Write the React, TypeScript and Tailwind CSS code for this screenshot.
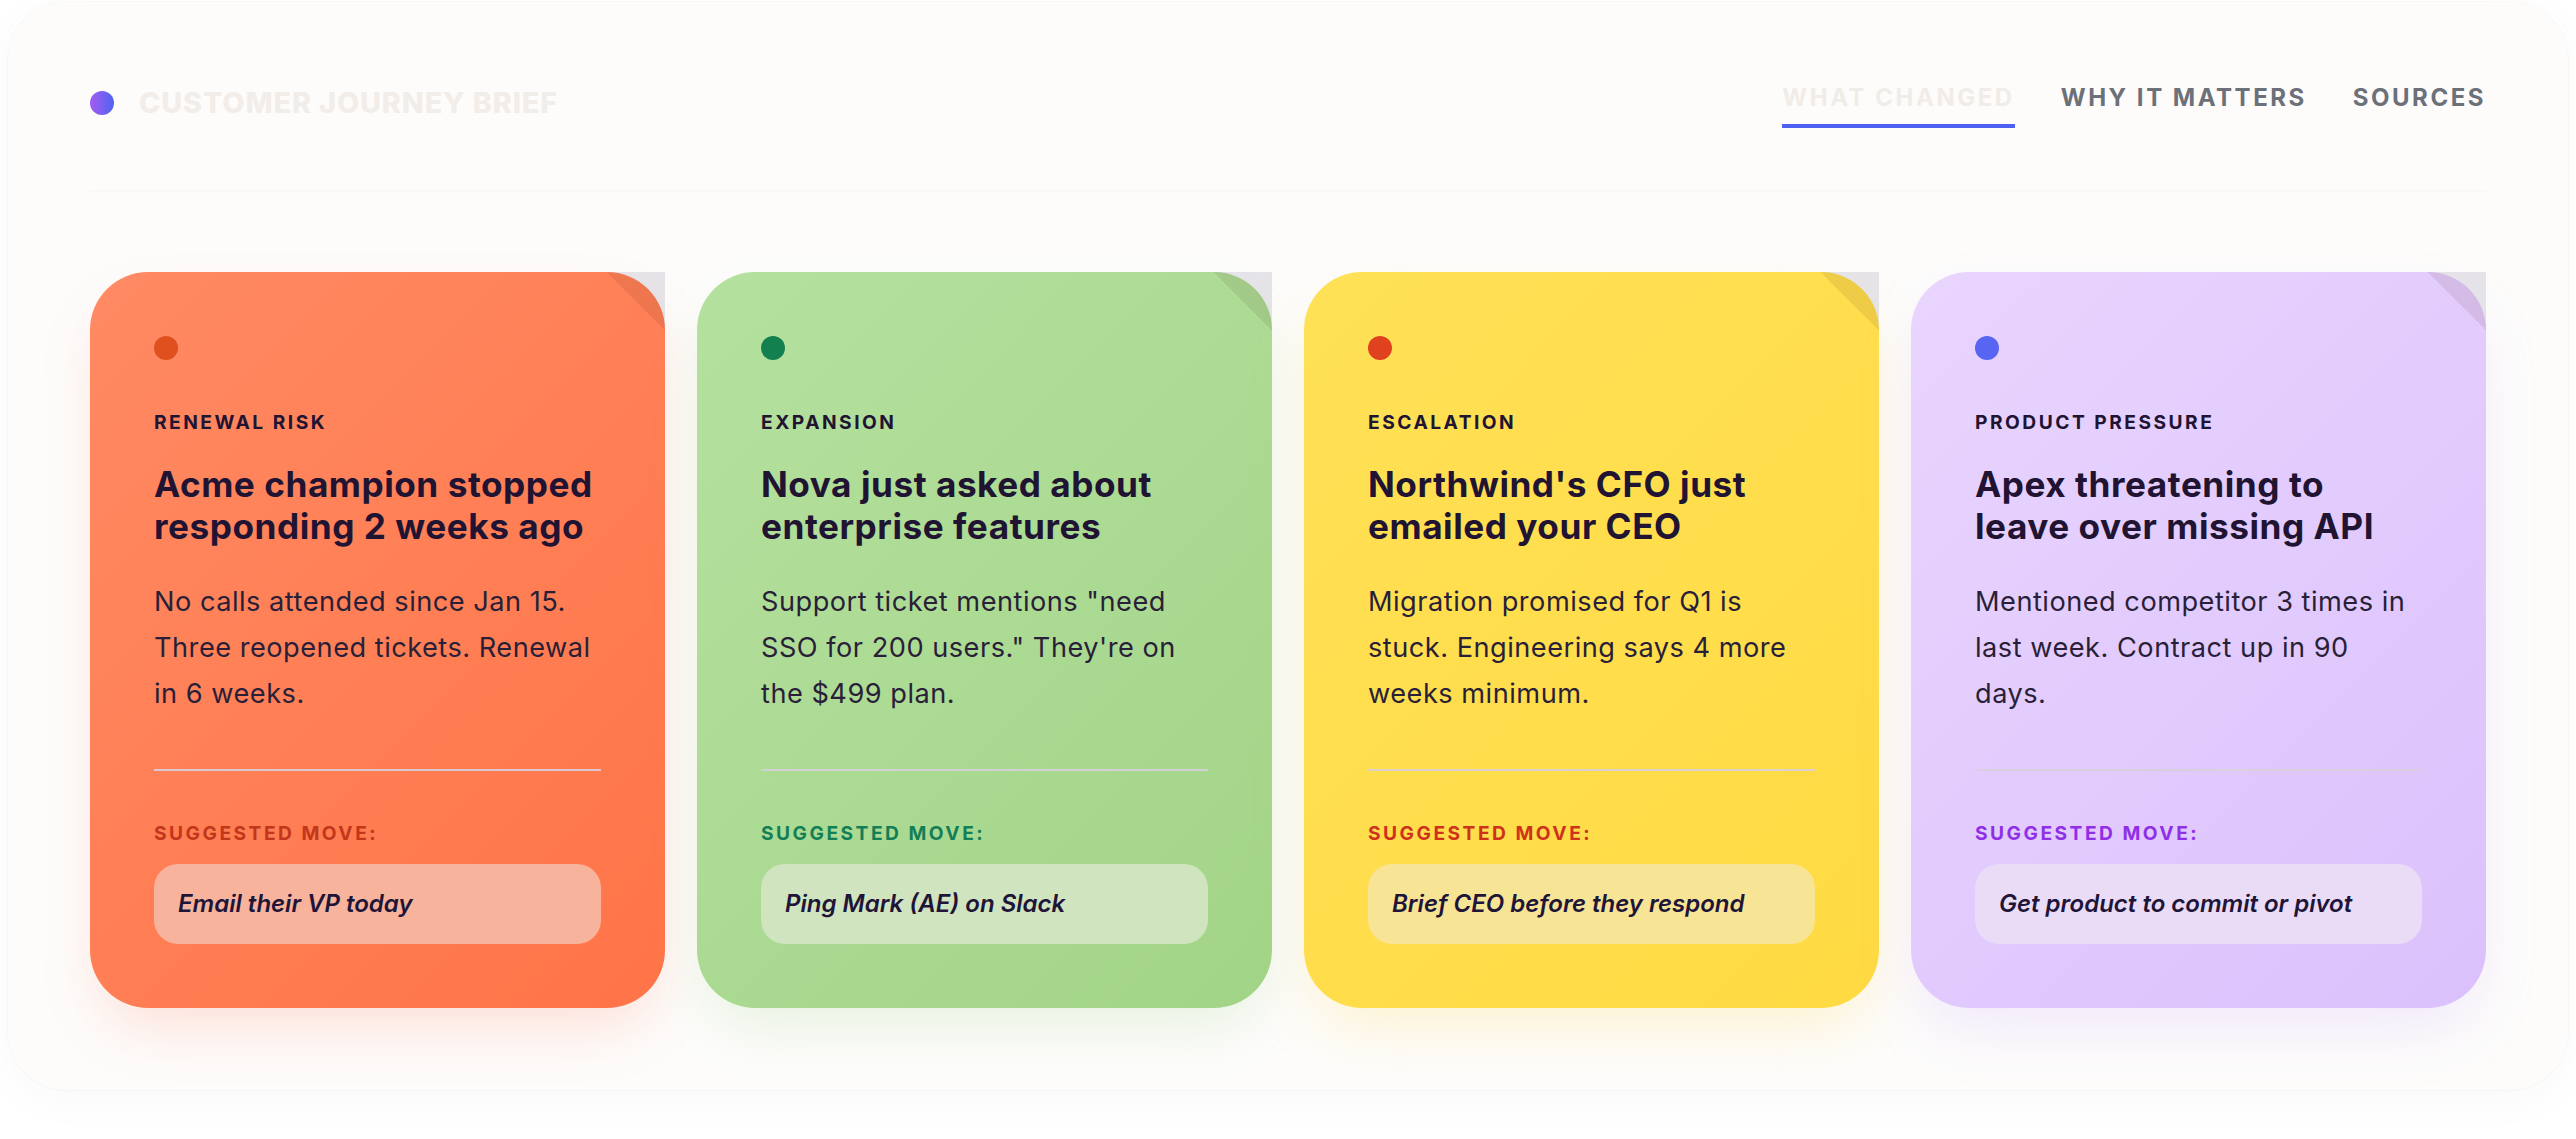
import React from "react";

type Signal = {
  label: string;
  title: string;
  body: string;
  move: string;
  card: string;
  glow: string;
  dot: string;
  moveLabel: string;
  moveBox: string;
};

const signals: Signal[] = [
  {
    label: "Renewal risk",
    title: "Acme champion stopped responding 2 weeks ago",
    body: "No calls attended since Jan 15. Three reopened tickets. Renewal in 6 weeks.",
    move: "Email their VP today",
    card: "bg-[linear-gradient(135deg,#ff8a63_0%,#ff7448_100%)]",
    glow: "shadow-[0_28px_60px_-12px_rgba(255,120,80,0.22)]",
    dot: "bg-[#e0501f]",
    moveLabel: "text-[#c2361a]",
    moveBox: "bg-[#f7b39b]"
  },
  {
    label: "Expansion",
    title: "Nova just asked about enterprise features",
    body: "Support ticket mentions \"need SSO for 200 users.\" They're on the $499 plan.",
    move: "Ping Mark (AE) on Slack",
    card: "bg-[linear-gradient(135deg,#b5e19f_0%,#a2d487_100%)]",
    glow: "shadow-[0_28px_60px_-12px_rgba(140,200,110,0.2)]",
    dot: "bg-[#13804f]",
    moveLabel: "text-[#137f57]",
    moveBox: "bg-[#cfe4bf]"
  },
  {
    label: "Escalation",
    title: "Northwind's CFO just emailed your CEO",
    body: "Migration promised for Q1 is stuck. Engineering says 4 more weeks minimum.",
    move: "Brief CEO before they respond",
    card: "bg-[linear-gradient(135deg,#ffe157_0%,#ffda42_100%)]",
    glow: "shadow-[0_28px_60px_-12px_rgba(255,215,70,0.25)]",
    dot: "bg-[#e0421f]",
    moveLabel: "text-[#cf321a]",
    moveBox: "bg-[#f7e495]"
  },
  {
    label: "Product pressure",
    title: "Apex threatening to leave over missing API",
    body: "Mentioned competitor 3 times in last week. Contract up in 90 days.",
    move: "Get product to commit or pivot",
    card: "bg-[linear-gradient(135deg,#e9d5fe_0%,#dbc1fc_100%)]",
    glow: "shadow-[0_28px_60px_-12px_rgba(200,170,250,0.25)]",
    dot: "bg-[#5865f2]",
    moveLabel: "text-[#8f2fe6]",
    moveBox: "bg-[#eadbf6]"
  }
];

const tabs = ["What changed", "Why it matters", "Sources"];

function SignalCard({ signal }: { signal: Signal }) {
  return (
    <div className="relative">
      {/* page-curl backdrop behind the top-right corner */}
      <div className="absolute right-0 top-0 h-[58px] w-[58px] bg-[#e6e4e9]" />
      <article className={`relative flex h-full flex-col overflow-hidden rounded-[58px] p-[64px] ${signal.card} ${signal.glow}`}>
        <div className="absolute right-0 top-0 h-[58px] w-[58px] bg-[linear-gradient(to_top_right,transparent_50%,rgba(60,20,0,0.09)_50%)]" />
        <span className={`h-6 w-6 rounded-full ${signal.dot}`} />
        <p className="mt-[51px] text-[19.2px] font-bold uppercase leading-[23px] tracking-[0.13em] text-[#211433]">
          {signal.label}
        </p>
        <h2 className="mt-[29px] text-[35.2px] font-bold leading-[42px] tracking-[0.015em] text-[#211433]">
          {signal.title}
        </h2>
        <p className="mt-[32px] text-[27.2px] leading-[1.7] tracking-[0.018em] text-[#2a1f38]">{signal.body}</p>
        <div className="mt-auto pt-[51px]">
          <div className="h-[2px] bg-[#d8cfdc]/90" />
          <p className={`mt-[51px] text-[19.2px] font-bold uppercase leading-[23px] tracking-[0.13em] ${signal.moveLabel}`}>
            Suggested move:
          </p>
          <div className={`mt-[19px] flex h-[80px] items-center rounded-[24px] px-[24px] ${signal.moveBox}`}>
            <span className="text-[24px] font-semibold italic text-[#1e1538]">{signal.move}</span>
          </div>
        </div>
      </article>
    </div>
  );
}

export default function App() {
  return (
    <div className="min-h-screen bg-white px-[8px] pt-[2px] font-[Inter,sans-serif]">
      <div className="rounded-[58px] bg-[#fdfcfb] px-[82px] shadow-[0_0_0_1px_rgba(120,100,90,0.035),0_10px_40px_rgba(120,100,90,0.04)]">
        <header className="flex items-start justify-between border-b-2 border-[#faf8f7] pb-[62px] pt-[82px]">
          <div className="mt-[2px] flex items-center gap-[25px]">
            <span className="h-6 w-6 rounded-full bg-[linear-gradient(90deg,#a55cf0,#4f63f2)]" />
            <h1 className="text-[28.8px] font-extrabold uppercase leading-[1.2] tracking-[0.03em] text-[#f2ede8]">
              Customer journey brief
            </h1>
          </div>
          <nav className="flex items-start gap-[46px]">
            {tabs.map((tab, index) => (
              <button
                key={tab}
                type="button"
                className={
                  index === 0
                    ? "border-b-4 border-[#4f5ff0] pb-[11px] text-[24px] font-bold uppercase leading-[1.2] tracking-[0.105em] text-[#f1ece7]"
                    : "border-b-4 border-transparent pb-[11px] text-[24px] font-bold uppercase leading-[1.2] tracking-[0.105em] text-[#6b7079]"
                }
              >
                {tab}
              </button>
            ))}
          </nav>
        </header>
        <section className="grid grid-cols-4 gap-[32px] pb-[82px] pt-[80px]">
          {signals.map((signal) => (
            <SignalCard key={signal.label} signal={signal} />
          ))}
        </section>
      </div>
    </div>
  );
}
